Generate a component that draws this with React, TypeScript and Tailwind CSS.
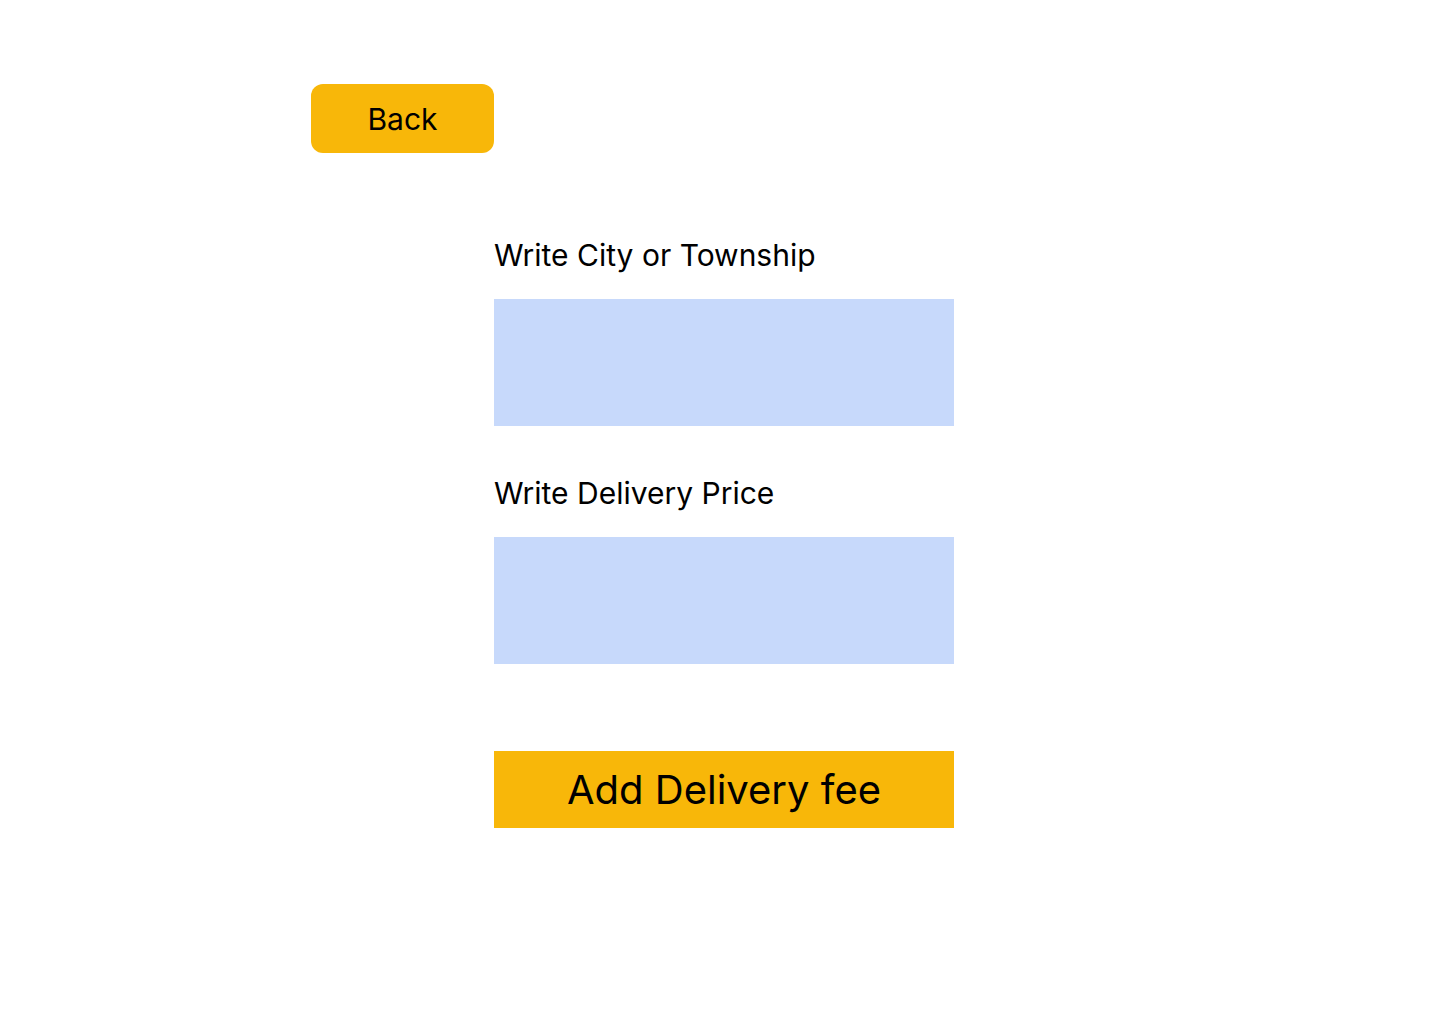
import React, { useState } from "react";

export default function App() {
  const [city, setCity] = useState("");
  const [price, setPrice] = useState("");

  return (
    <div
      className="w-[1440px] min-h-[1024px] bg-white text-black"
      style={{ fontFamily: "Inter, 'Noto Sans', sans-serif" }}
    >
      {/* Back button */}
      <div className="pt-[84px] pl-[311px]">
        <button className="w-[183px] h-[69px] rounded-[12px] bg-[#F8B709] text-[30px] leading-[36px] flex items-center justify-center">
          Back
        </button>
      </div>

      {/* Form */}
      <div className="pl-[494px] pt-[84px] flex flex-col w-[954px]">
        <label className="text-[30px] leading-[36px]">Write City or Township</label>
        <input
          value={city}
          onChange={(e) => setCity(e.target.value)}
          className="mt-[26px] w-[460px] h-[127px] bg-[#C7D9FB] outline-none px-4 text-[24px]"
        />

        <label className="mt-[49px] text-[30px] leading-[36px]">Write Delivery Price</label>
        <input
          value={price}
          onChange={(e) => setPrice(e.target.value)}
          className="mt-[26px] w-[460px] h-[127px] bg-[#C7D9FB] outline-none px-4 text-[24px]"
        />

        <button className="mt-[87px] w-[460px] h-[77px] bg-[#F8B709] text-[40px] leading-[48px] flex items-center justify-center">
          Add Delivery fee
        </button>
      </div>
    </div>
  );
}
